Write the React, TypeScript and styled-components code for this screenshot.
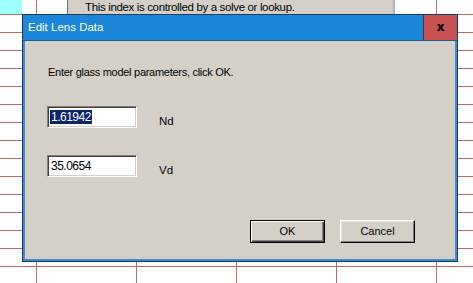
import React from 'react'
import styled, { createGlobalStyle } from 'styled-components'

const GlobalStyle = createGlobalStyle`
  html, body {
    margin: 0;
    padding: 0;
    background: #ffffff;
  }
`

const Sheet = styled.div`
  position: relative;
  width: 473px;
  height: 283px;
  overflow: hidden;
  background-color: #ffffff;
  background-image:
    linear-gradient(to right, #b56a6c 1px, transparent 1px),
    linear-gradient(to bottom, #b56a6c 1px, transparent 1px);
  background-size: 100px 18px;
  background-position: 36px 14px;
  font-family: 'Liberation Sans', Arial, sans-serif;
  font-size: 11px;
  color: #000000;
`

const ActiveCell = styled.div`
  position: absolute;
  left: 0;
  top: 0;
  width: 22px;
  height: 14px;
  background: #9effff;
`

const HintPanel = styled.div`
  position: absolute;
  left: 67px;
  top: -6px;
  width: 328px;
  height: 20px;
  display: flex;
  align-items: flex-end;
  padding-left: 17px;
  box-sizing: border-box;
  background: #d4d0c8;
  border-left: 1px solid #6f6f6f;
  border-right: 2px solid #a8b4c4;
  font-size: 11.5px;
  letter-spacing: -0.35px;
  line-height: 14px;
`

const Dialog = styled.div`
  position: absolute;
  left: 22px;
  top: 14px;
  width: 436px;
  height: 248px;
  box-sizing: border-box;
  display: flex;
  flex-direction: column;
  border: 1px solid #173a60;
  background: #3f8bd2;
  padding: 0 2px 2px 2px;
`

const TitleBar = styled.div`
  display: flex;
  align-items: stretch;
  height: 25px;
  margin: 0 -2px;
  background: #1c86d9;
  border-bottom: 1px solid #1a5a92;
`

const Title = styled.div`
  flex: 1;
  display: flex;
  align-items: center;
  padding-left: 5px;
  padding-bottom: 1px;
  color: #ffffff;
  font-size: 11.5px;
`

const CloseButton = styled.div`
  width: 33px;
  display: flex;
  align-items: center;
  justify-content: center;
  background: #c75050;
  border-left: 1px solid #3a3a4a;
  font-family: 'DejaVu Sans', sans-serif;
  font-weight: bold;
  font-size: 12px;
  color: #000000;
  padding-bottom: 1px;
`

const Body = styled.div`
  flex: 1;
  display: flex;
  flex-direction: column;
  background: #d4d0c8;
  padding: 25px 40px 0 22px;
`

const Prompt = styled.div`
  margin-left: 1px;
  line-height: 13px;
  letter-spacing: -0.28px;
`

const FieldRow = styled.div<{ gap: number }>`
  display: flex;
  align-items: flex-start;
  margin-top: ${({ gap }) => gap}px;
`

const Field = styled.div`
  width: 90px;
  height: 22px;
  box-sizing: border-box;
  display: flex;
  align-items: center;
  padding-left: 2px;
  background: #ffffff;
  border-top: 1px solid #808080;
  border-left: 1px solid #808080;
  border-right: 1px solid #ffffff;
  border-bottom: 1px solid #ffffff;
  box-shadow: inset 1px 1px 0 #404040, inset -1px -1px 0 #d4d0c8;
  font-size: 12px;
  letter-spacing: -0.5px;
`

const FieldText = styled.span<{ selected?: boolean }>`
  display: inline-block;
  line-height: 14px;
  padding: 0 1px;
  background: ${({ selected }) => (selected ? '#0a246a' : 'transparent')};
  color: ${({ selected }) => (selected ? '#ffffff' : '#000000')};
`

const FieldLabel = styled.div`
  margin-left: 22px;
  padding-top: 9px;
  line-height: 13px;
  font-size: 11.5px;
`

const ButtonRow = styled.div`
  display: flex;
  justify-content: flex-end;
  gap: 15px;
  margin-top: 43px;
`

const Button = styled.div<{ isDefault?: boolean }>`
  width: 75px;
  height: 23px;
  box-sizing: border-box;
  display: flex;
  align-items: center;
  justify-content: center;
  background: #d4d0c8;
  border: 1px solid ${({ isDefault }) => (isDefault ? '#000000' : '#ffffff')};
  border-right-color: #000000;
  border-bottom-color: #000000;
  box-shadow: ${({ isDefault }) =>
    isDefault
      ? 'inset 1px 1px 0 #ffffff, inset -1px -1px 0 #404040, inset -2px -2px 0 #808080'
      : 'inset -1px -1px 0 #808080, inset 1px 1px 0 #e8e6e0'};
  padding-bottom: 1px;
`

export default function App() {
  return (
    <>
      <GlobalStyle />
      <Sheet>
        <ActiveCell />
        <HintPanel>This index is controlled by a solve or lookup.</HintPanel>
        <Dialog>
          <TitleBar>
            <Title>Edit Lens Data</Title>
            <CloseButton>x</CloseButton>
          </TitleBar>
          <Body>
            <Prompt>Enter glass model parameters, click OK.</Prompt>
            <FieldRow gap={27}>
              <Field>
                <FieldText selected>1.61942</FieldText>
              </Field>
              <FieldLabel>Nd</FieldLabel>
            </FieldRow>
            <FieldRow gap={27}>
              <Field>
                <FieldText>35.0654</FieldText>
              </Field>
              <FieldLabel>Vd</FieldLabel>
            </FieldRow>
            <ButtonRow>
              <Button isDefault>OK</Button>
              <Button>Cancel</Button>
            </ButtonRow>
          </Body>
        </Dialog>
      </Sheet>
    </>
  )
}
